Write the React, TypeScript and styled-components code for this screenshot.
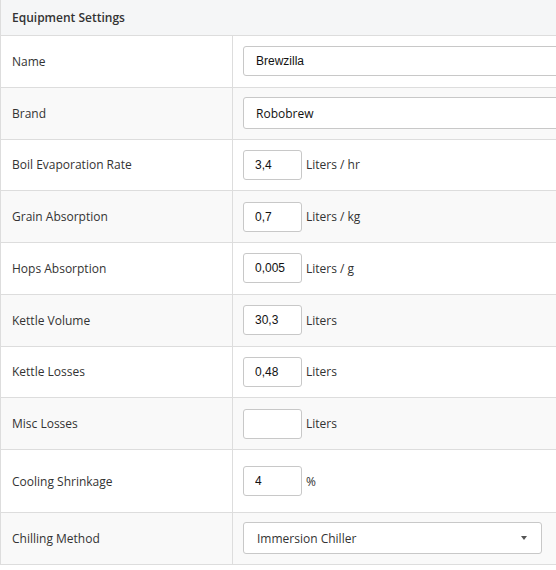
import React from 'react';
import styled, { createGlobalStyle } from 'styled-components';

const GlobalStyle = createGlobalStyle`
  html, body {
    margin: 0;
    padding: 0;
    overflow: hidden;
    background: #fff;
  }
  body {
    font-family: "Open Sans", "Liberation Sans", sans-serif;
    color: #333;
  }
`;

const Panel = styled.div`
  width: 640px;
  border-left: 1px solid #ddd;
  background: #fff;
`;

const Header = styled.div`
  height: 35px;
  display: flex;
  align-items: center;
  padding: 0 11px;
  background: #f5f6f7;
  border-bottom: 1px solid #ddd;
  font-size: 12px;
  font-weight: 600;
  color: #333;
`;

const Row = styled.div<{ $striped?: boolean; $tall?: boolean }>`
  display: grid;
  grid-template-columns: 232px 1fr;
  min-height: ${(p) => (p.$tall ? 62 : 50.75)}px;
  background: ${(p) => (p.$striped ? '#f9f9f9' : '#fff')};
  border-bottom: 1px solid #ddd;
`;

const LabelCell = styled.div`
  display: flex;
  align-items: center;
  padding: 0 11px;
  border-right: 1px solid #ddd;
  font-size: 12px;
  color: #333;
`;

const ValueCell = styled.div`
  display: flex;
  align-items: center;
  gap: 4px;
  padding: 0 10px;
  font-size: 12px;
  color: #333;
`;

const TextInput = styled.input<{ $font?: 'sans' | 'open' }>`
  box-sizing: border-box;
  width: 100%;
  height: ${(p) => (p.$font === 'open' ? 32 : 30)}px;
  padding: 0 12px;
  border: 1px solid #c8c8c8;
  border-radius: 3px;
  background: #fff;
  font-family: ${(p) =>
    p.$font === 'open' ? '"Open Sans", sans-serif' : '"Liberation Sans", Arial, sans-serif'};
  font-size: 12px;
  color: #111;
  outline: none;
`;

const NumberInput = styled.input`
  box-sizing: border-box;
  width: 59px;
  height: 30px;
  padding: 0 11px;
  border: 1px solid #c8c8c8;
  border-radius: 3px;
  background: #fff;
  font-family: "Liberation Sans", Arial, sans-serif;
  font-size: 12px;
  color: #111;
  outline: none;
`;

const Unit = styled.span`
  font-size: 12px;
  color: #333;
  white-space: nowrap;
`;

const Select = styled.div`
  box-sizing: border-box;
  width: 299px;
  height: 32px;
  display: flex;
  align-items: center;
  justify-content: space-between;
  padding: 0 14px 0 13px;
  border: 1px solid #c8c8c8;
  border-radius: 3px;
  background: #fff;
  font-size: 12px;
  color: #333;
`;

const Caret = styled.span`
  width: 0;
  height: 0;
  border-left: 3.5px solid transparent;
  border-right: 3.5px solid transparent;
  border-top: 4px solid #555;
`;

type NumRow = { label: string; value: string; unit: string };

const numberRows: NumRow[] = [
  { label: 'Boil Evaporation Rate', value: '3,4', unit: 'Liters / hr' },
  { label: 'Grain Absorption', value: '0,7', unit: 'Liters / kg' },
  { label: 'Hops Absorption', value: '0,005', unit: 'Liters / g' },
  { label: 'Kettle Volume', value: '30,3', unit: 'Liters' },
  { label: 'Kettle Losses', value: '0,48', unit: 'Liters' },
  { label: 'Misc Losses', value: '', unit: 'Liters' },
];

export default function App() {
  return (
    <>
      <GlobalStyle />
      <Panel>
        <Header>Equipment Settings</Header>
        <Row>
          <LabelCell>Name</LabelCell>
          <ValueCell>
            <TextInput defaultValue="Brewzilla" />
          </ValueCell>
        </Row>
        <Row $striped>
          <LabelCell>Brand</LabelCell>
          <ValueCell>
            <TextInput $font="open" defaultValue="Robobrew" />
          </ValueCell>
        </Row>
        {numberRows.map((r, i) => (
          <Row key={r.label} $striped={i % 2 === 1}>
            <LabelCell>{r.label}</LabelCell>
            <ValueCell>
              <NumberInput defaultValue={r.value} />
              <Unit>{r.unit}</Unit>
            </ValueCell>
          </Row>
        ))}
        <Row $tall>
          <LabelCell>Cooling Shrinkage</LabelCell>
          <ValueCell>
            <NumberInput defaultValue="4" />
            <Unit>%</Unit>
          </ValueCell>
        </Row>
        <Row $striped>
          <LabelCell>Chilling Method</LabelCell>
          <ValueCell>
            <Select>
              <span>Immersion Chiller</span>
              <Caret />
            </Select>
          </ValueCell>
        </Row>
      </Panel>
    </>
  );
}
